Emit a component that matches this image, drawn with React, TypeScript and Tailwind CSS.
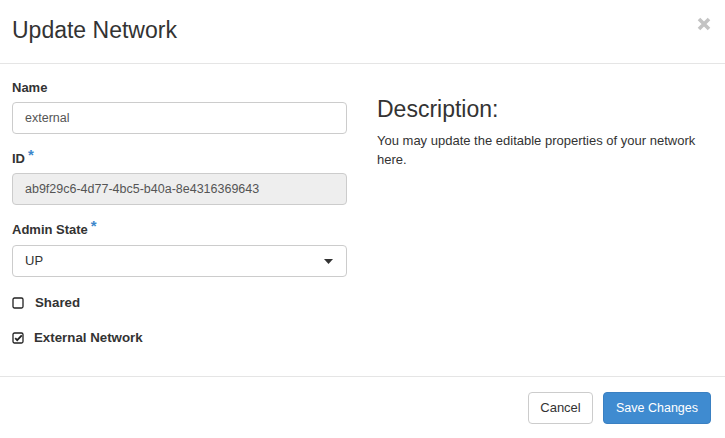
import React from 'react';

function Req() {
  return <span className="ml-[3px] text-[#3d87cb] text-[15px] leading-none font-bold relative -top-[3px]">*</span>;
}

function BoxIcon({ checked }: { checked?: boolean }) {
  return (
    <svg width="12" height="12" viewBox="0 0 12 12" fill="none">
      <rect x="1" y="1" width="10" height="10" rx="1.5" stroke="#222" strokeWidth="1.3" />
      {checked && <path d="M3.2 6.1 L5.2 8.1 L9.8 3.3" stroke="#222" strokeWidth="1.8" fill="none" />}
    </svg>
  );
}

export default function App() {
  return (
    <div className="w-[725px] h-[438px] bg-white flex flex-col text-[#333]" style={{ fontFamily: '"Liberation Sans", Arial, sans-serif' }}>
      {/* header */}
      <div className="h-[64px] shrink-0 border-b border-[#e5e5e5] flex items-start justify-between pl-[12px] pr-[13px]">
        <h3 className="text-[23px] leading-[26px] mt-[17px] font-normal">Update Network</h3>
        <button className="mt-[17px] mr-[1px]">
          <svg width="14" height="14" viewBox="0 0 14 14">
            <path d="M2 2 L12 12 M12 2 L2 12" stroke="#c3c3c3" strokeWidth="3.6" strokeLinecap="butt" />
          </svg>
        </button>
      </div>

      {/* body */}
      <div className="flex-1 flex px-[12px] pt-[15px] gap-[30px]">
        <div className="w-[335px] shrink-0 flex flex-col">
          <label className="h-[18px] text-[13px] font-bold leading-[18px] mb-[5px]">Name</label>
          <div className="h-[32px] border border-[#ccc] rounded-[4px] px-[12px] flex items-center text-[12.5px] text-[#555]">external</div>

          <label className="h-[18px] text-[13px] font-bold leading-[18px] mt-[16px] mb-[5px]">ID<Req /></label>
          <div className="h-[32px] border border-[#ccc] bg-[#eee] rounded-[4px] px-[12px] flex items-center text-[12.5px] text-[#555]">ab9f29c6-4d77-4bc5-b40a-8e4316369643</div>

          <label className="h-[18px] text-[13px] font-bold leading-[18px] mt-[16px] mb-[6px]">Admin State<Req /></label>
          <div className="h-[32px] border border-[#ccc] rounded-[4px] pl-[12px] pr-[13px] flex items-center justify-between text-[13px] text-[#333]">
            <span>UP</span>
            <svg width="9" height="5" viewBox="0 0 9 5"><path d="M0 0 H9 L4.5 5 Z" fill="#333" /></svg>
          </div>

          <div className="flex items-center mt-[17px] h-[18px]">
            <BoxIcon />
            <span className="ml-[11px] text-[13.3px] font-bold">Shared</span>
          </div>
          <div className="flex items-center mt-[17px] h-[18px]">
            <BoxIcon checked />
            <span className="ml-[10px] text-[13.3px] font-bold">External Network</span>
          </div>
        </div>

        <div className="flex-1 flex flex-col pr-[12px]">
          <h3 className="text-[23px] leading-[26px] mt-[17px] font-normal">Description:</h3>
          <p className="text-[13px] leading-[19px] mt-[9px]">You may update the editable properties of your network here.</p>
        </div>
      </div>

      {/* footer */}
      <div className="h-[62px] shrink-0 border-t border-[#e5e5e5] flex items-start justify-end gap-[10px] pt-[15px] pr-[14px]">
        <button className="h-[32px] w-[65px] border border-[#ccc] rounded-[4px] bg-white text-[13px] text-[#333]">Cancel</button>
        <button className="h-[32px] w-[108px] border border-[#3a80c2] rounded-[4px] bg-[#3f8bd0] text-[12.5px] text-white">Save Changes</button>
      </div>
    </div>
  );
}
